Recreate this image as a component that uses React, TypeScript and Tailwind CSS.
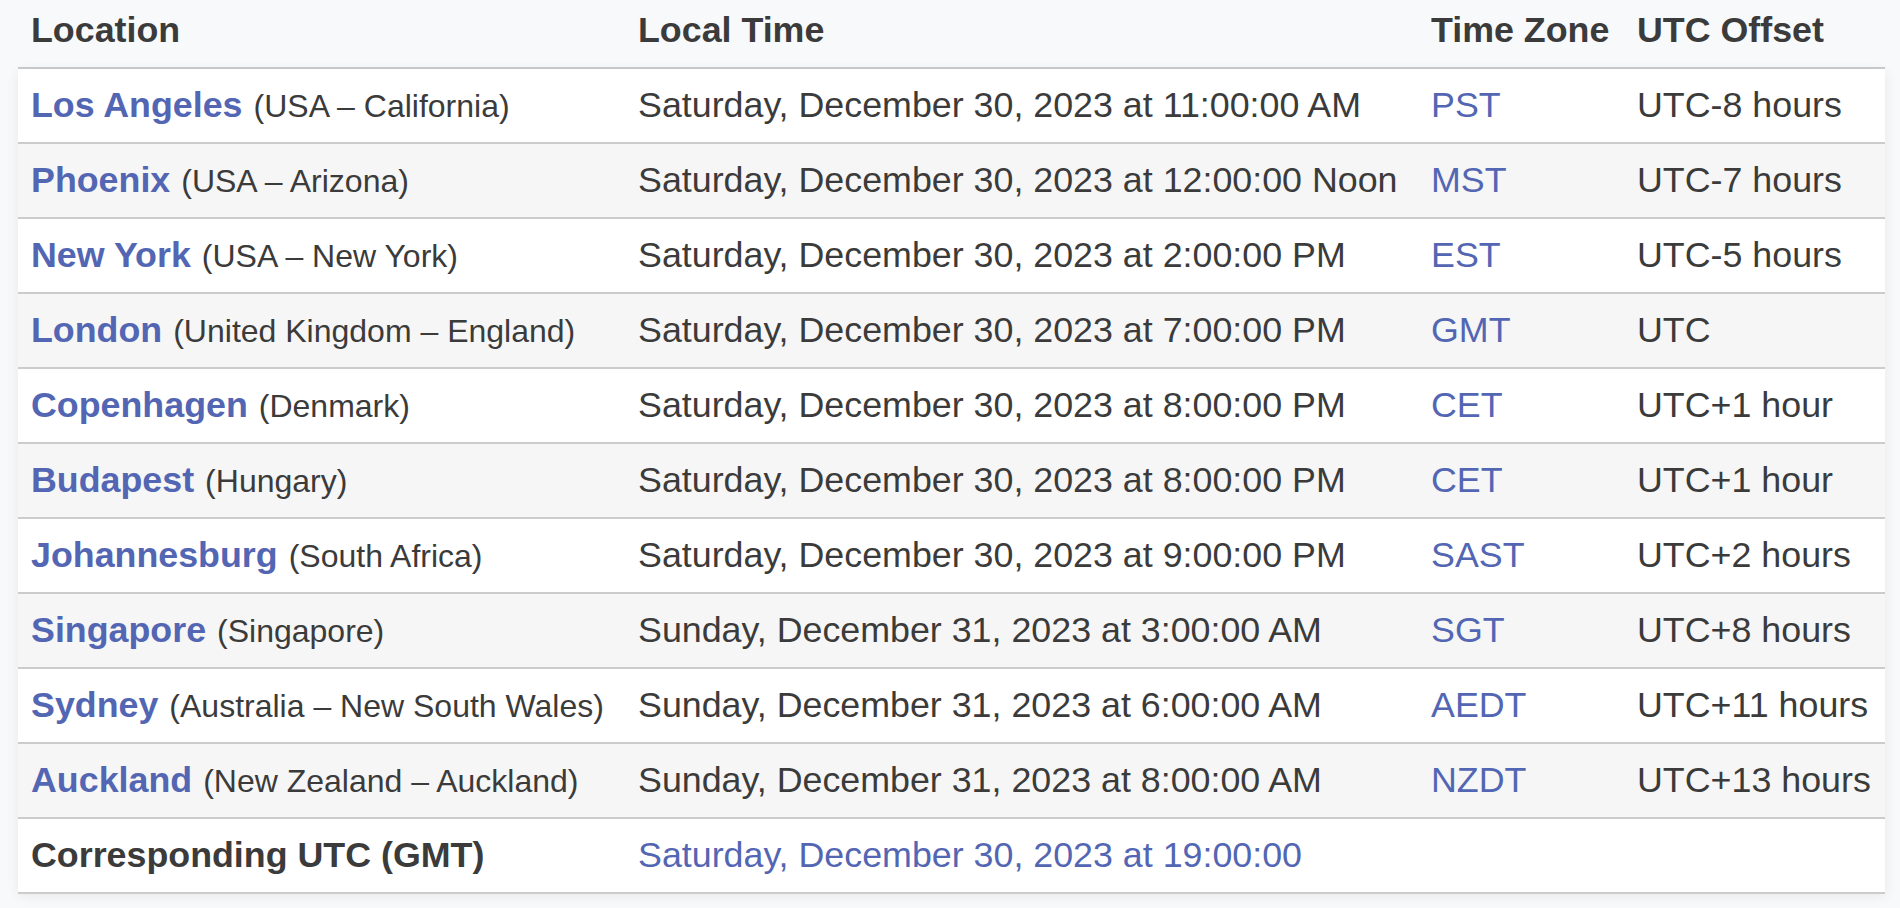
import React from "react";

type Row = {
  city: string;
  region: string;
  time: string;
  zone: string;
  offset: string;
};

const rows: Row[] = [
  { city: "Los Angeles", region: "(USA – California)", time: "Saturday, December 30, 2023 at 11:00:00 AM", zone: "PST", offset: "UTC-8 hours" },
  { city: "Phoenix", region: "(USA – Arizona)", time: "Saturday, December 30, 2023 at 12:00:00 Noon", zone: "MST", offset: "UTC-7 hours" },
  { city: "New York", region: "(USA – New York)", time: "Saturday, December 30, 2023 at 2:00:00 PM", zone: "EST", offset: "UTC-5 hours" },
  { city: "London", region: "(United Kingdom – England)", time: "Saturday, December 30, 2023 at 7:00:00 PM", zone: "GMT", offset: "UTC" },
  { city: "Copenhagen", region: "(Denmark)", time: "Saturday, December 30, 2023 at 8:00:00 PM", zone: "CET", offset: "UTC+1 hour" },
  { city: "Budapest", region: "(Hungary)", time: "Saturday, December 30, 2023 at 8:00:00 PM", zone: "CET", offset: "UTC+1 hour" },
  { city: "Johannesburg", region: "(South Africa)", time: "Saturday, December 30, 2023 at 9:00:00 PM", zone: "SAST", offset: "UTC+2 hours" },
  { city: "Singapore", region: "(Singapore)", time: "Sunday, December 31, 2023 at 3:00:00 AM", zone: "SGT", offset: "UTC+8 hours" },
  { city: "Sydney", region: "(Australia – New South Wales)", time: "Sunday, December 31, 2023 at 6:00:00 AM", zone: "AEDT", offset: "UTC+11 hours" },
  { city: "Auckland", region: "(New Zealand – Auckland)", time: "Sunday, December 31, 2023 at 8:00:00 AM", zone: "NZDT", offset: "UTC+13 hours" },
];

const cols = "grid grid-cols-[607px_793px_206px_261px]";

export default function App() {
  return (
    <div className="min-h-screen bg-[#f8f9fb] pl-[18px] font-['Liberation_Sans',Arial,sans-serif] text-[35.8px] leading-[1.15] text-[#3b3b3b]">
      <div className="w-[1867px]">
        {/* Header */}
        <div className={`${cols} h-[69px] border-b-2 border-[#cccccc] font-bold`}>
          <div className="flex items-center pb-[5px] pl-[13px]">Location</div>
          <div className="flex items-center pb-[5px] pl-[13px]">Local Time</div>
          <div className="flex items-center pb-[5px] pl-[13px]">Time Zone</div>
          <div className="flex items-center pb-[5px] pl-[13px]">UTC Offset</div>
        </div>

        {/* Body */}
        <div className="bg-white shadow-[0_2px_12px_rgba(0,0,0,0.07)]">
          {rows.map((r, idx) => (
            <div
              key={r.city}
              className={`${cols} h-[75px] border-b-2 border-[#cccccc] ${idx % 2 === 1 ? "bg-[#f6f6f6]" : "bg-white"}`}
            >
              <div className="flex items-center whitespace-nowrap pl-[13px] pt-[1px]">
                <div className="flex items-baseline">
                  <span className="font-bold text-[#5366b3]">{r.city}</span>
                  <span className="ml-[11px] text-[32px]">{r.region}</span>
                </div>
              </div>
              <div className="flex items-center whitespace-nowrap pl-[13px] pt-[1px]">{r.time}</div>
              <div className="flex items-center whitespace-nowrap pl-[13px] pt-[1px] text-[#5366b3]">{r.zone}</div>
              <div className="flex items-center whitespace-nowrap pl-[13px] pt-[1px]">{r.offset}</div>
            </div>
          ))}
          <div className={`${cols} h-[75px] border-b-2 border-[#cccccc] bg-white`}>
            <div className="flex items-center whitespace-nowrap pl-[13px] pt-[1px] font-bold">Corresponding UTC (GMT)</div>
            <div className="col-span-3 flex items-center whitespace-nowrap pl-[13px] pt-[1px] text-[#5366b3]">
              Saturday, December 30, 2023 at 19:00:00
            </div>
          </div>
        </div>
      </div>
    </div>
  );
}
